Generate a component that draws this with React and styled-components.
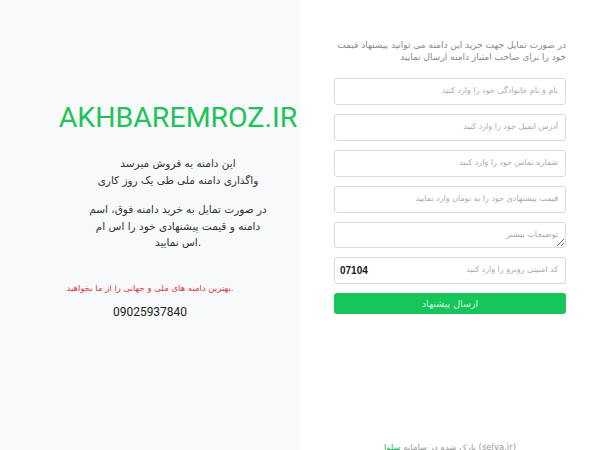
import React from 'react';
import styled, { createGlobalStyle } from 'styled-components';

const GlobalStyle = createGlobalStyle`
  html, body {
    margin: 0;
    padding: 0;
  }
  body {
    font-family: Roboto, "DejaVu Sans", sans-serif;
    background: #fff;
  }
`;

const Page = styled.div`
  display: grid;
  grid-template-columns: 300px 300px;
  min-height: 100vh;
`;

const Side = styled.aside`
  background: #f8f9fa;
  padding-top: 101px;
`;

const Intro = styled.div`
  margin-left: 56px;
  text-align: center;
`;

const Domain = styled.h1`
  margin: 0;
  font-family: Roboto, sans-serif;
  font-weight: 400;
  font-size: 28.5px;
  line-height: 34px;
  color: #22c25b;
`;

const Text = styled.p`
  margin: ${p => p.$top}px 0 0;
  white-space: nowrap;
  font-family: "DejaVu Sans", sans-serif;
  font-size: 10.5px;
  line-height: 16.5px;
  color: #333;
`;

const Note = styled.p`
  margin: 31px 0 0;
  text-align: center;
  font-family: "DejaVu Sans", sans-serif;
  font-size: 8.5px;
  line-height: 12px;
  color: #d9383f;
`;

const Phone = styled.p`
  margin: 10px 0 0;
  text-align: center;
  font-family: Roboto, sans-serif;
  font-size: 12px;
  line-height: 16px;
  color: #222;
`;

const Main = styled.main`
  display: flex;
  flex-direction: column;
  padding: 39px 34px 0;
`;

const Lead = styled.p`
  margin: 0 0 15px;
  direction: rtl;
  text-align: right;
  white-space: nowrap;
  font-family: "DejaVu Sans", sans-serif;
  font-size: 9px;
  line-height: 12px;
  color: #888;
`;

const Form = styled.form`
  display: flex;
  flex-direction: column;
  gap: 9px;
`;

const fieldStyle = `
  box-sizing: border-box;
  width: 100%;
  margin: 0;
  border: 1px solid #dadada;
  border-radius: 3px;
  background: #fff;
  text-align: right;
  font-family: "DejaVu Sans", sans-serif;
  font-size: 8px;
  color: #333;
  outline: none;
  &::placeholder {
    color: #a9a9a9;
  }
`;

const Field = styled.input`
  ${fieldStyle}
  height: 27px;
  padding: 0 7px 2px;
`;

const Area = styled.textarea`
  ${fieldStyle}
  display: block;
  height: 26px;
  padding: 7px 7px 0;
  resize: vertical;
`;

const CaptchaRow = styled.div`
  position: relative;
`;

const CaptchaCode = styled.span`
  position: absolute;
  left: 6px;
  top: 8px;
  font-family: "Liberation Sans", Arial, sans-serif;
  font-weight: 700;
  font-size: 10px;
  line-height: 12px;
  color: #1a1a1a;
  pointer-events: none;
`;

const Submit = styled.button`
  height: 21px;
  border: none;
  border-radius: 3px;
  background: #16c65a;
  direction: rtl;
  font-family: "DejaVu Sans", sans-serif;
  font-size: 9.5px;
  color: rgba(255, 255, 255, 0.8);
  cursor: pointer;
`;

const Footer = styled.footer`
  margin-top: 127px;
  direction: rtl;
  text-align: center;
  font-family: "DejaVu Sans", sans-serif;
  font-size: 8.5px;
  line-height: 12px;
  color: #999;
`;

const Latin = styled.span`
  direction: ltr;
  unicode-bidi: isolate;
`;

const Brand = styled.a`
  color: #22b55a;
  text-decoration: none;
`;

const fields = [
  'نام و نام خانوادگی خود را وارد کنید',
  'آدرس ایمیل خود را وارد کنید',
  'شماره تماس خود را وارد کنید',
  'قیمت پیشنهادی خود را به تومان وارد نمایید',
];

export default function App() {
  return (
    <>
      <GlobalStyle />
      <Page>
        <Side>
          <Intro>
            <Domain>AKHBAREMROZ.IR</Domain>
            <Text $top={20}>
              این دامنه به فروش میرسد
              <br />
              واگذاری دامنه ملی طی یک روز کاری
            </Text>
            <Text $top={13}>
              در صورت تمایل به خرید دامنه فوق، اسم
              <br />
              دامنه و قیمت پیشنهادی خود را اس ام
              <br />
              اس نمایید.
            </Text>
          </Intro>
          <Note>بهترین دامنه های ملی و جهانی را از ما بخواهید.</Note>
          <Phone>09025937840</Phone>
        </Side>
        <Main>
          <Lead>
            در صورت تمایل جهت خرید این دامنه می توانید پیشنهاد قیمت
            <br />
            خود را برای صاحب امتیاز دامنه ارسال نمایید
          </Lead>
          <Form onSubmit={e => e.preventDefault()}>
            {fields.map(text => (
              <Field key={text} placeholder={text} />
            ))}
            <Area placeholder="توضیحات بیشتر" />
            <CaptchaRow>
              <Field placeholder="کد امنیتی روبرو را وارد کنید" />
              <CaptchaCode>07104</CaptchaCode>
            </CaptchaRow>
            <Submit type="submit">ارسال پیشنهاد</Submit>
          </Form>
          <Footer>
            <Latin>(selva.ir)</Latin> پارک شده در سامانه <Brand href="#">سلوا</Brand>
          </Footer>
        </Main>
      </Page>
    </>
  );
}
